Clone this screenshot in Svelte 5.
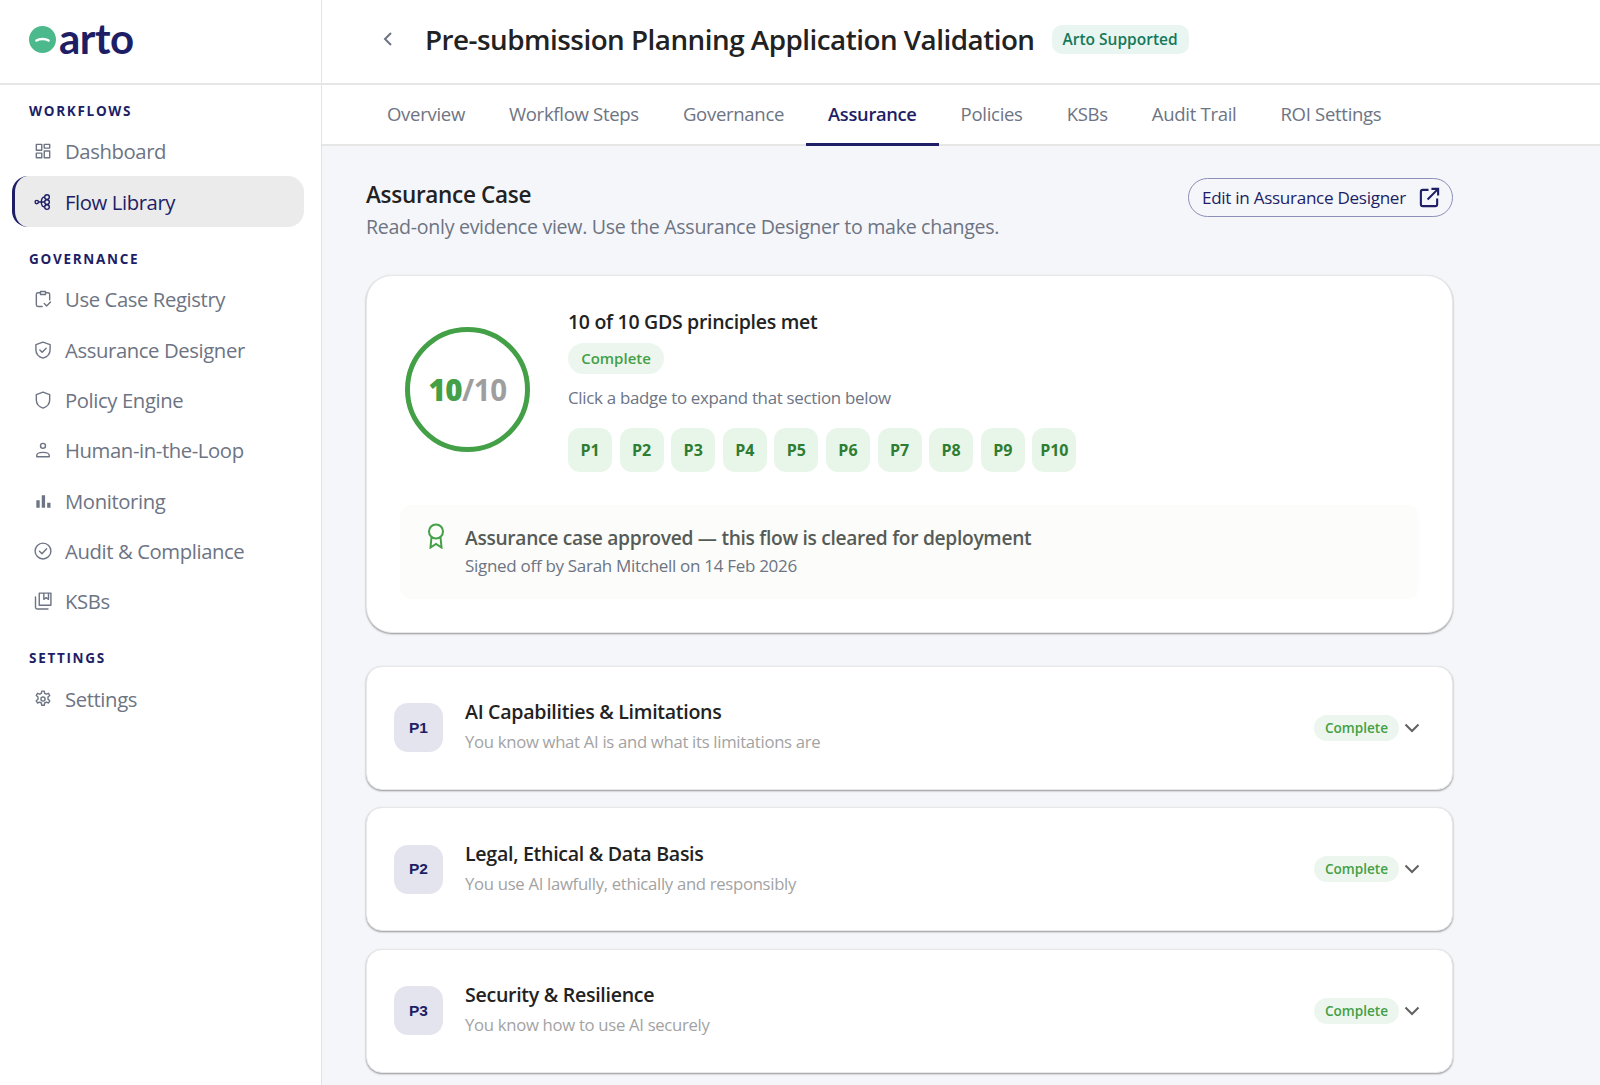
<script lang="ts">
    interface NavItem {
        label: string;
        icon: string;
        active?: boolean;
    }

    const icons: Record<string, string> = {
        dashboard: 'M4 4h6.500v7H4zM13.500 4H20v4.500h-6.500zM4 14.500h6.500V20H4zM13.500 12H20v8h-6.500z',
        flow: 'M2.500 12a2 2 0 1 0 4 0a2 2 0 1 0-4 0M6.500 12h7M10 12c0-3 1-6 4-6M10 12c0 3 1 6 4 6M14 6a2.800 2.800 0 1 0 5.600 0a2.800 2.800 0 1 0-5.600 0M14 12a2.800 2.800 0 1 0 5.600 0a2.800 2.800 0 1 0-5.600 0M14 18a2.800 2.800 0 1 0 5.600 0a2.800 2.800 0 1 0-5.600 0',
        registry: 'M9 4.500H6a2 2 0 0 0-2 2v12.500a2 2 0 0 0 2 2h5M15 4.500h3a2 2 0 0 1 2 2v6.500M9 3h6v3.500H9zM13.500 17.500l2.800 2.800L21 15.500',
        shieldcheck: 'M12 2.500l8.500 3v6.500c0 5-3.500 8.200-8.500 9.800C7 20.200 3.500 17 3.500 12V5.500zM8.200 12l2.800 2.800l4.800-5',
        shield: 'M12 2.500l8 3v6.500c0 5-3.300 8.200-8 9.800C7.300 20.200 4 17 4 12V5.500z',
        person: 'M9 7a3 3 0 1 0 6 0a3 3 0 1 0-6 0M4.500 20v-1.500c0-2.200 3.400-3.700 7.500-3.700s7.500 1.500 7.500 3.700V20z',
        circlecheck: 'M2.500 12a9.500 9.500 0 1 0 19 0a9.500 9.500 0 1 0-19 0M7.800 12.200l3 3l5.500-6',
        book: 'M3 7v12.500a2 2 0 0 0 2 2h13M7.500 2.500h14V17h-14zM13 2.500v7.500l2.800-2l2.800 2V2.500',
        gear: 'M9.500 12a2.500 2.500 0 1 0 5 0a2.500 2.500 0 1 0-5 0M10.500 2.500h3l.5 2.700l2 1l2.600-1l1.500 2.600l-2.100 1.800v2.800l2.100 1.800l-1.500 2.600l-2.600-1l-2 1l-.5 2.700h-3l-.5-2.700l-2-1l-2.600 1l-1.500-2.600l2.100-1.800v-2.800l-2.100-1.800l1.500-2.600l2.600 1l2-1z'
    };

    const workflows: NavItem[] = [
        { label: 'Dashboard', icon: 'dashboard' },
        { label: 'Flow Library', icon: 'flow', active: true }
    ];
    const governance: NavItem[] = [
        { label: 'Use Case Registry', icon: 'registry' },
        { label: 'Assurance Designer', icon: 'shieldcheck' },
        { label: 'Policy Engine', icon: 'shield' },
        { label: 'Human-in-the-Loop', icon: 'person' },
        { label: 'Monitoring', icon: 'bars' },
        { label: 'Audit & Compliance', icon: 'circlecheck' },
        { label: 'KSBs', icon: 'book' }
    ];
    const settings: NavItem[] = [{ label: 'Settings', icon: 'gear' }];

    const navSections = [
        { title: 'WORKFLOWS', items: workflows },
        { title: 'GOVERNANCE', items: governance },
        { title: 'SETTINGS', items: settings }
    ];

    const tabs = ['Overview', 'Workflow Steps', 'Governance', 'Assurance', 'Policies', 'KSBs', 'Audit Trail', 'ROI Settings'];
    const badges = ['P1', 'P2', 'P3', 'P4', 'P5', 'P6', 'P7', 'P8', 'P9', 'P10'];

    const principles = [
        { id: 'P1', title: 'AI Capabilities & Limitations', text: 'You know what AI is and what its limitations are' },
        { id: 'P2', title: 'Legal, Ethical & Data Basis', text: 'You use AI lawfully, ethically and responsibly' },
        { id: 'P3', title: 'Security & Resilience', text: 'You know how to use AI securely' }
    ];
</script>

<div class="page">
    <aside class="sidebar">
        <div class="logo">
            <svg width="27" height="27" viewBox="0 0 27 27">
                <circle cx="13.500" cy="13.500" r="13.500" fill="#4bb98c" />
                <path d="M7.500 14.500c3-2 9-2 12 0" fill="none" stroke="#fff" stroke-width="2.600" stroke-linecap="round" />
            </svg>
            <span class="logo_text">arto</span>
        </div>
        <nav class="nav">
            {#each navSections as section}
                <h4 class="nav_title">{section.title}</h4>
                {#each section.items as item}
                    <div class={item.active ? 'nav_item active' : 'nav_item'}>
                        <svg class="nav_icon" viewBox="0 0 24 24">
                            {#if item.icon === 'bars'}
                                <path class="solid" d="M4 11h4v9H4zM10.500 5h4v15h-4zM17 14h4v6h-4z" />
                            {:else}
                                <path d={icons[item.icon]} />
                            {/if}
                        </svg>
                        {item.label}
                    </div>
                {/each}
            {/each}
        </nav>
    </aside>

    <main class="main">
        <header class="header">
            <svg class="back" viewBox="0 0 12 18"><path d="M9 3L3 9l6 6" /></svg>
            <h1>Pre-submission Planning Application Validation</h1>
            <span class="supported">Arto Supported</span>
        </header>

        <div class="tabs">
            {#each tabs as tab}
                <div class={tab === 'Assurance' ? 'tab selected' : 'tab'}>{tab}</div>
            {/each}
        </div>

        <section class="content">
            <div class="content_head">
                <div>
                    <h2>Assurance Case</h2>
                    <p class="lead">Read-only evidence view. Use the Assurance Designer to make changes.</p>
                </div>
                <button class="edit">
                    Edit in Assurance Designer
                    <svg viewBox="0 0 24 24"><path d="M11 4H5a2 2 0 0 0-2 2v13a2 2 0 0 0 2 2h13a2 2 0 0 0 2-2v-6M14 3h7v7M21 3L10 14" /></svg>
                </button>
            </div>

            <div class="card summary">
                <div class="summary_top">
                    <div class="score"><b>10</b><span>/10</span></div>
                    <div class="summary_info">
                        <h3>10 of 10 GDS principles met</h3>
                        <span class="pill big">Complete</span>
                        <p class="hint">Click a badge to expand that section below</p>
                        <div class="badges">
                            {#each badges as badge}
                                <div class="badge">{badge}</div>
                            {/each}
                        </div>
                    </div>
                </div>
                <div class="approved">
                    <svg viewBox="0 0 20 26"><path d="M10 1.500a7 7 0 1 0 0 14a7 7 0 1 0 0-14M5.500 14l-1 10.500l5.500-3.500l5.500 3.500l-1-10.500" /></svg>
                    <div>
                        <strong>Assurance case approved — this flow is cleared for deployment</strong>
                        <p>Signed off by Sarah Mitchell on 14 Feb 2026</p>
                    </div>
                </div>
            </div>

            {#each principles as item}
                <div class="card principle">
                    <div class="principle_id">{item.id}</div>
                    <div class="principle_text">
                        <h3>{item.title}</h3>
                        <p>{item.text}</p>
                    </div>
                    <span class="pill">Complete</span>
                    <svg class="chevron" viewBox="0 0 16 10"><path d="M1.500 1.500L8 8l6.500-6.500" /></svg>
                </div>
            {/each}
        </section>
    </main>
</div>

<style>
    :global(body) {
        margin: 0;
        background: #fff;
    }

    .page {
        display: flex;
        height: 1085px;
        overflow: hidden;
        font-family: "Open Sans", "Liberation Sans", sans-serif;
        color: #222;
    }

    .sidebar {
        width: 321px;
        flex: none;
        border-right: 1px solid #e3e3e3;
    }

    .logo {
        height: 78px;
        padding-bottom: 5px;
        display: flex;
        align-items: center;
        gap: 3px;
        padding-left: 29px;
        border-bottom: 2px solid #e6e6e6;
        box-sizing: content-box;
        margin-right: -1px;
    }

    .logo_text {
        font-family: "Lato", sans-serif;
        font-size: 42px;
        font-weight: 700;
        color: #1d1e66;
        letter-spacing: -0.5px;
        line-height: 40px;
        margin-top: -3px;
    }

    .nav {
        display: flex;
        flex-direction: column;
        padding: 17.500px 17px 0 12px;
    }

    .nav_title {
        margin: 0 0 6.600px;
        padding-left: 17px;
        height: 17px;
        line-height: 17px;
        font-size: 13.500px;
        font-weight: 700;
        letter-spacing: 1.700px;
        color: #1d1e66;
    }

    .nav_item + .nav_title {
        margin-top: 24px;
    }

    .nav_item {
        height: 50.300px;
        display: flex;
        align-items: center;
        gap: 12px;
        padding-left: 21px;
        font-size: 20.300px;
        letter-spacing: -0.400px;
        color: #6d7483;
    }

    .active {
        background: #ebebeb;
        border-radius: 16px;
        border-left: 3px solid #1d1e66;
        padding-left: 18px;
        color: #1d1e66;
    }

    .nav_icon {
        width: 20px;
        height: 20px;
        flex: none;
        fill: none;
        stroke: currentColor;
        stroke-width: 1.700;
        stroke-linejoin: round;
        stroke-linecap: round;
    }

    .solid {
        fill: currentColor;
        stroke: none;
    }

    .main {
        flex: 1;
        min-width: 0;
        background: #f5f6fa;
    }

    .header {
        height: 78px;
        padding-bottom: 5px;
        background: #fff;
        border-bottom: 2px solid #e6e6e6;
        box-sizing: content-box;
        display: flex;
        align-items: center;
        padding-left: 60px;
    }

    .back {
        width: 12px;
        height: 18px;
        margin-right: 31px;
        fill: none;
        stroke: #6d7483;
        stroke-width: 2;
    }

    h1 {
        margin: 0;
        font-size: 27.800px;
        font-weight: 600;
        letter-spacing: -0.500px;
        color: #222;
    }

    .supported {
        margin-left: 17px;
        height: 29px;
        line-height: 29px;
        padding: 0 11px;
        border-radius: 10px;
        background: #e9f5f1;
        color: #14795a;
        font-size: 15.500px;
        font-weight: 600;
    }

    .tabs {
        display: flex;
        height: 59px;
        padding-left: 43px;
        background: #fff;
        border-bottom: 2px solid #e6e6e6;
    }

    .tab {
        padding: 0 22px 3px;
        display: flex;
        align-items: center;
        font-size: 18.550px;
        letter-spacing: -0.300px;
        color: #6d7483;
    }

    .selected {
        color: #1d1e66;
        font-weight: 600;
        border-bottom: 3px solid #1d1e66;
        margin-bottom: -2px;
        padding-bottom: 1px;
        font-size: 18.300px;
    }

    .content {
        width: 1087px;
        padding: 34px 0 0 44px;
        display: flex;
        flex-direction: column;
        gap: 17.400px;
    }

    .content_head {
        display: flex;
        justify-content: space-between;
        align-items: flex-start;
        margin-bottom: 17.600px;
    }

    h2 {
        margin: 0;
        font-size: 22.500px;
        font-weight: 600;
        line-height: 30px;
        letter-spacing: -0.300px;
    }

    .lead {
        margin: 4px 0 0;
        font-size: 19.600px;
        line-height: 26px;
        letter-spacing: -0.300px;
        color: #6d7483;
    }

    .edit {
        height: 39px;
        width: 265px;
        box-sizing: border-box;
        display: flex;
        align-items: center;
        justify-content: space-between;
        padding: 0 11px 0 13px;
        margin-top: -2px;
        background: transparent;
        border: 1px solid #8c8fb8;
        border-radius: 20px;
        font-family: inherit;
        font-size: 17.100px;
        letter-spacing: -0.300px;
        color: #1d1e66;
    }

    .edit svg {
        width: 23px;
        height: 23px;
        fill: none;
        stroke: #1d1e66;
        stroke-width: 2.200;
    }

    .card {
        background: #fff;
        border: 1px solid #e8e8e8;
        box-shadow: 0 1px 2px rgba(0, 0, 0, 0.4);
        box-sizing: border-box;
    }

    .summary {
        height: 358px;
        border-radius: 26px;
        padding: 34px 33px 0;
        margin-bottom: 15.600px;
    }

    .summary_top {
        display: flex;
        gap: 38px;
    }

    .score {
        width: 125px;
        height: 125px;
        box-sizing: border-box;
        margin-top: 17px;
        margin-left: 5px;
        border: 5px solid #43a047;
        border-radius: 50%;
        display: flex;
        align-items: center;
        justify-content: center;
        font-size: 29.500px;
        font-weight: 700;
        letter-spacing: -0.500px;
        color: #43a047;
    }

    .score span {
        color: #9e9e9e;
    }

    .summary_info h3 {
        margin: 0;
        font-size: 19.500px;
        font-weight: 600;
        line-height: 24px;
        letter-spacing: -0.300px;
    }

    .pill {
        height: 26px;
        line-height: 26px;
        width: 85px;
        text-align: center;
        border-radius: 13px;
        background: #edf6ee;
        color: #43a047;
        font-size: 13.600px;
        font-weight: 600;
        flex: none;
    }

    .big {
        display: block;
        width: 96px;
        height: 31px;
        line-height: 31px;
        border-radius: 16px;
        margin-top: 9px;
        font-size: 15px;
    }

    .hint {
        margin: 12px 0 0;
        font-size: 16.900px;
        line-height: 24px;
        letter-spacing: -0.300px;
        color: #6d7483;
    }

    .badges {
        display: flex;
        gap: 7.600px;
        margin-top: 18px;
    }

    .badge {
        width: 44px;
        height: 44px;
        display: flex;
        align-items: center;
        justify-content: center;
        border-radius: 12px;
        background: #e8f5e9;
        color: #2e7d32;
        font-size: 16px;
        font-weight: 700;
    }

    .approved {
        display: flex;
        gap: 19px;
        height: 94px;
        box-sizing: border-box;
        margin-top: 33px;
        padding: 19px 26px 0;
        border-radius: 12px;
        background: #fcfcfa;
    }

    .approved svg {
        width: 20px;
        height: 26px;
        margin-top: -1px;
        flex: none;
        fill: none;
        stroke: #43a047;
        stroke-width: 2;
    }

    .approved strong {
        display: block;
        font-size: 19.200px;
        font-weight: 600;
        line-height: 28px;
        letter-spacing: -0.300px;
        color: #555b57;
    }

    .approved p {
        margin: 1px 0 0;
        font-size: 17px;
        line-height: 26px;
        letter-spacing: -0.300px;
        color: #6d7483;
    }

    .principle {
        height: 124px;
        border-radius: 16px;
        display: flex;
        align-items: center;
        padding: 0 31px 0 27px;
    }

    .principle_id {
        width: 49px;
        height: 49px;
        display: flex;
        align-items: center;
        justify-content: center;
        border-radius: 14px;
        background: #e4e4ee;
        color: #1d1e66;
        font-family: "Liberation Sans", sans-serif;
        font-size: 15.500px;
        font-weight: 700;
    }

    .principle_text {
        flex: 1;
        margin-left: 22px;
    }

    .principle_text h3 {
        margin: 0;
        font-size: 19.600px;
        font-weight: 600;
        line-height: 28px;
        letter-spacing: -0.300px;
        transform: translateY(-2px);
    }

    .principle_text p {
        margin: 1px 0 0;
        font-size: 16.700px;
        line-height: 26px;
        letter-spacing: -0.300px;
        color: #a3a3a3;
    }

    .chevron {
        width: 16px;
        height: 10px;
        margin-left: 5px;
        margin-right: 1px;
        fill: none;
        stroke: #616161;
        stroke-width: 2;
    }
</style>
